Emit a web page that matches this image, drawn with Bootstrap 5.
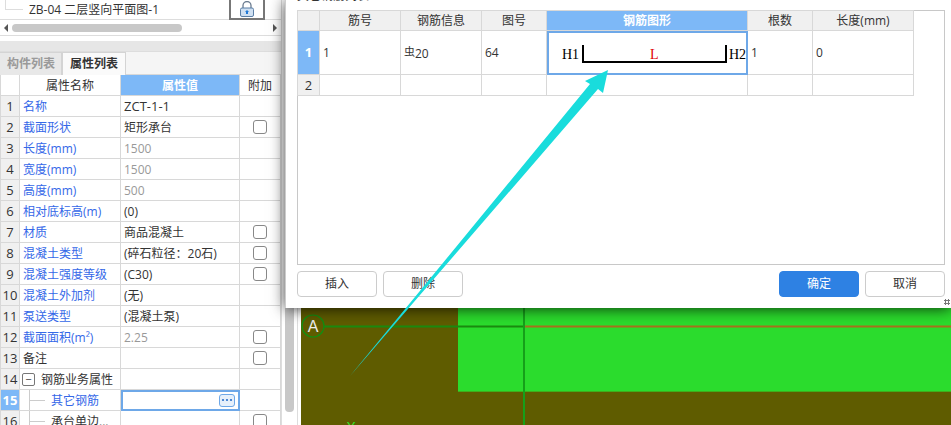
<!DOCTYPE html>
<html lang="zh-CN">
<head>
  <meta charset="UTF-8">
  <meta name="viewport" content="width=device-width, initial-scale=1.0">
  <title>钢筋图形</title>
  <link href="https://cdn.jsdelivr.net/npm/bootstrap@5.3.0/dist/css/bootstrap.min.css" rel="stylesheet">
  <style>
    html, body { height: 425px; overflow: hidden; }
    body { font-family: "Open Sans", "Noto Sans CJK SC", sans-serif; font-size: 12px; color: #333; background: #fff; }
    .stage { width: 951px; height: 425px; }

    /* left side */
    .side { width: 281px; height: 425px; overflow: hidden; }
    .tree-row { height: 20px; border-bottom: 1px solid #ddd; padding-left: 5px; }
    .tree-line { width: 18px; height: 10px; margin-top: -10px; border-bottom: 1px solid #ddd; border-left: 1px solid #ddd; }
    .tree-name { margin-left: 6px; line-height: 20px; }
    .lock-box { width: 36px; height: 20px; margin-left: auto; margin-right: 16px; border: 2px solid #777; border-top: 0; }
    .hscroll { height: 16px; border-bottom: 1px solid #ddd; }
    .hthumb { width: 170px; height: 8px; border-radius: 4px; background: #c8c8c8; margin: 0 3px; }
    .band { height: 11px; margin-top: 5px; background: #e6e6e6; border-bottom: 1px solid #ddd; }
    .tabs { height: 23px; background: #f5f5f5; }
    .tab-item { height: 23px; line-height: 21px; padding: 0 7px; font-weight: 700; border: 1px solid #d4d4d4; border-bottom: 0; background: #fafafa; }
    .tab-off { color: #9a9a9a; background: #e8e8e8; border-left: 0; padding-right: 6px; }

    .grid-tbl { table-layout: fixed; border-collapse: collapse; }
    .grid-tbl > tbody > tr > * { padding: 0 3px; line-height: 17px; border: 1px solid #d8d8d8; background: #fff; color: #333; box-shadow: none; white-space: nowrap; overflow: hidden; font-weight: 400; vertical-align: middle; }
    .grid-tbl > tbody > tr > .num { background: #f0f0f0; text-align: center; padding: 0; font-size: 13px; }
    .grid-tbl > tbody > tr > .blank { background: #fff; }
    .grid-tbl > tbody > tr > .hd { text-align: center; }
    .grid-tbl > tbody > tr > .on { background: #7db8f7; color: #fff; font-weight: 700; text-align: center; }
    .grid-tbl > tbody > tr > .nm { color: #3568e8; }
    .grid-tbl > tbody > tr > .gy { color: #999; }
    .grid-tbl > tbody > tr > .ctr { text-align: center; padding: 0; line-height: 1; }
    .grid-tbl > tbody > tr > .lat { font-size: 13px; }
    .prop-tbl { width: 280px; margin: -1px 0 0; }
    .prop-tbl tr { height: 21px; }
    .cb { width: 14px; height: 14px; margin: 0; border: 1px solid #888; border-radius: 2px; float: none; vertical-align: middle; }
    .minus { width: 13px; height: 13px; margin-left: -1px; margin-right: 6px; border: 1px solid #777; border-radius: 2px; font-size: 11px; line-height: 10px; text-align: center; }
    .indent { padding-left: 6px; }
    .tree-dash { position: relative; width: 16px; border-top: 1px solid #ccc; margin-right: 6px; }
    .tree-dash::before { content: ""; position: absolute; left: 0; top: -11px; width: 1px; height: 21px; background: #ccc; }
    .sel-cell { outline: 2px solid #6ea8e8; outline-offset: -2px; }
    .more-btn { width: 16px; height: 13px; margin-right: 1px; border: 1px solid #6ea8e8; border-radius: 3px; background: #e6f0fb; }

    .vstrip { width: 20px; height: 425px; border-left: 1px solid #ddd; }
    .vtrack { width: 16px; height: 425px; padding: 0 3px; border-right: 1px solid #ddd; }
    .vthumb { height: 412px; border-radius: 0 0 4px 4px; background: #c8c8c8; }
    .scene { width: 650px; height: 425px; display: block; }

    /* dialog */
    .dlg { position: absolute; left: 285px; top: 0; width: 666px; height: 308px; padding: 0 6px 0 11px; background: #fff; border-left: 1px solid #ccc; box-shadow: 0 1px 14px rgba(0, 0, 0, .75); }
    .dlg-title { height: 10px; line-height: 1; overflow: hidden; }
    .dlg-title span { display: block; margin-top: -10px; }
    .bar-box { height: 255px; border: 1px solid #c8c8c8; }
    .bar-tbl { width: 616px; margin: -1px 0 0 -1px; }
    .bar-tbl .head-row { height: 20px; }
    .bar-tbl .head-row > * { background: #f0f0f0; }
    .bar-tbl .big-row { height: 44px; }
    .bar-tbl .low-row { height: 21px; }
    .grid-tbl > tbody > tr > .sel-shape { padding: 0; outline: 2px solid #6ea8e8; outline-offset: -2px; }
    .shape-svg { display: block; width: 200px; height: 42px; }
    .shape-svg text { font-family: "Liberation Serif", serif; font-size: 14px; }
    .bar-sign { font-size: 11px; vertical-align: 2px; }
    .dlg-foot { margin-top: 6px; gap: 6px; }
    .act { width: 80px; height: 26px; padding: 0; font-size: 12px; border: 1px solid #ccc; border-radius: 4px; color: #333; background: #fff; }
    .act-main { border-color: #2e81e3; background: #2e81e3; color: #fff; }
    .grip { position: absolute; right: 1px; bottom: 3px; width: 6px; height: 6px; background: radial-gradient(circle, #777 1.2px, transparent 1.3px) 0 0 / 3px 3px; }

    .arrow { position: absolute; left: 0; top: 0; width: 951px; height: 425px; pointer-events: none; }
  </style>
</head>
<body>
  <div class="stage position-relative d-flex">
    <div class="side flex-shrink-0">
      <div class="tree-row d-flex align-items-center">
        <div class="tree-line"></div>
        <span class="tree-name">ZB-04 二层竖向平面图-1</span>
        <div class="lock-box d-flex align-items-center justify-content-center">
          <svg width="16" height="16" viewBox="0 0 16 16">
            <path d="M4 7V4.500a4 4 0 0 1 8 0V7" fill="none" stroke="#6b7c90" stroke-width="1.300"/>
            <rect x="1.500" y="7" width="13" height="8.500" rx="1.500" fill="#cfe0f2" stroke="#5b7fa6"/>
            <path d="M8 9l2 2H9v2H7v-2H6z" fill="#1f78d6"/>
          </svg>
        </div>
      </div>
      <div class="hscroll d-flex align-items-center">
        <svg class="ms-1" width="5" height="8" viewBox="0 0 5 8"><path d="M4 0v8L0 4z" fill="#555"/></svg>
        <div class="hthumb"></div>
        <svg class="ms-auto me-1" width="5" height="8" viewBox="0 0 5 8"><path d="M1 0v8l4-4z" fill="#555"/></svg>
      </div>
      <div class="band"></div>
      <div class="tabs d-flex">
        <div class="tab-item tab-off">构件列表</div>
        <div class="tab-item">属性列表</div>
      </div>
      <table class="table grid-tbl prop-tbl">
        <colgroup><col style="width:19px"><col style="width:101px"><col style="width:119px"><col style="width:41px"></colgroup>
        <tbody>
          <tr><td class="num blank"></td><td class="hd">属性名称</td><td class="on">属性值</td><td class="hd">附加</td></tr>
          <tr><td class="num">1</td><td class="nm">名称</td><td class="lat">ZCT-1-1</td><td></td></tr>
          <tr><td class="num">2</td><td class="nm">截面形状</td><td>矩形承台</td><td class="ctr"><input class="form-check-input cb" type="checkbox"></td></tr>
          <tr><td class="num">3</td><td class="nm">长度(mm)</td><td class="gy">1500</td><td></td></tr>
          <tr><td class="num">4</td><td class="nm">宽度(mm)</td><td class="gy">1500</td><td></td></tr>
          <tr><td class="num">5</td><td class="nm">高度(mm)</td><td class="gy">500</td><td></td></tr>
          <tr><td class="num">6</td><td class="nm">相对底标高(m)</td><td>(0)</td><td></td></tr>
          <tr><td class="num">7</td><td class="nm">材质</td><td>商品混凝土</td><td class="ctr"><input class="form-check-input cb" type="checkbox"></td></tr>
          <tr><td class="num">8</td><td class="nm">混凝土类型</td><td>(碎石粒径：20石)</td><td class="ctr"><input class="form-check-input cb" type="checkbox"></td></tr>
          <tr><td class="num">9</td><td class="nm">混凝土强度等级</td><td>(C30)</td><td class="ctr"><input class="form-check-input cb" type="checkbox"></td></tr>
          <tr><td class="num">10</td><td class="nm">混凝土外加剂</td><td>(无)</td><td></td></tr>
          <tr><td class="num">11</td><td class="nm">泵送类型</td><td>(混凝土泵)</td><td></td></tr>
          <tr><td class="num">12</td><td class="nm">截面面积(m²)</td><td class="gy">2.25</td><td class="ctr"><input class="form-check-input cb" type="checkbox"></td></tr>
          <tr><td class="num">13</td><td>备注</td><td></td><td class="ctr"><input class="form-check-input cb" type="checkbox"></td></tr>
          <tr><td class="num">14</td><td><div class="d-flex align-items-center"><span class="minus">−</span>钢筋业务属性</div></td><td></td><td></td></tr>
          <tr><td class="num on">15</td><td class="nm"><div class="d-flex align-items-center indent"><span class="tree-dash"></span>其它钢筋</div></td><td class="sel-cell"><div class="d-flex justify-content-end"><span class="more-btn d-flex align-items-center justify-content-center"><svg width="12" height="4" viewBox="0 0 12 4"><g fill="#2a6fc9"><circle cx="2" cy="2" r="1.100"/><circle cx="6" cy="2" r="1.100"/><circle cx="10" cy="2" r="1.100"/></g></svg></span></div></td><td></td></tr>
          <tr><td class="num">16</td><td><div class="d-flex align-items-center indent"><span class="tree-dash"></span>承台单边...</div></td><td></td><td class="ctr"><input class="form-check-input cb" type="checkbox"></td></tr>
        </tbody>
      </table>
    </div>

    <div class="vstrip flex-shrink-0">
      <div class="vtrack"><div class="vthumb"></div></div>
    </div>

    <svg class="scene flex-shrink-0" viewBox="301 0 650 425">
      <rect x="301" y="0" width="650" height="425" fill="#5f5c00"/>
      <rect x="458" y="0" width="493" height="392" fill="#2bdc2d"/>
      <path d="M458 391.500H951" stroke="#3fae1c"/>
      <path d="M324 326.500H524" stroke="#1b8a10" stroke-width="2"/>
      <path d="M524 326.500H951" stroke="#a8701e" stroke-width="2"/>
      <path d="M524 0V425" stroke="#16a01a" stroke-width="2"/>
      <circle cx="313" cy="326" r="11" fill="none" stroke="#119011" stroke-width="1.200"/>
      <text x="313" y="332" text-anchor="middle" font-family="Liberation Sans" font-size="16" fill="#eee">A</text>
      <text x="351" y="431" text-anchor="middle" font-family="Liberation Sans" font-size="13" fill="#2fe82f">Y</text>
    </svg>

    <div class="dlg">
      <div class="dlg-title"><span>其它钢筋列表</span></div>
      <div class="bar-box">
        <table class="table grid-tbl bar-tbl">
          <colgroup><col style="width:22px"><col style="width:81px"><col style="width:81px"><col style="width:65px"><col style="width:201px"><col style="width:65px"><col style="width:101px"></colgroup>
          <tbody>
            <tr class="head-row"><td class="num"></td><td class="hd">筋号</td><td class="hd">钢筋信息</td><td class="hd">图号</td><td class="on">钢筋图形</td><td class="hd">根数</td><td class="hd">长度(mm)</td></tr>
            <tr class="big-row"><td class="num on">1</td><td>1</td><td><span class="bar-sign">虫</span>20</td><td>64</td>
              <td class="sel-shape">
                <svg class="shape-svg" viewBox="0 0 200 42">
                  <text x="15" y="27">H1</text>
                  <path d="M36 13V30H179V13" fill="none" stroke="#000" stroke-width="2"/>
                  <text x="103" y="27" fill="#e00000">L</text>
                  <text x="182" y="27">H2</text>
                </svg>
              </td>
              <td>1</td><td>0</td></tr>
            <tr class="low-row"><td class="num">2</td><td></td><td></td><td></td><td></td><td></td><td></td></tr>
          </tbody>
        </table>
      </div>
      <div class="dlg-foot d-flex">
        <button class="btn act" type="button">插入</button>
        <button class="btn act" type="button">删除</button>
        <button class="btn act act-main ms-auto" type="button">确定</button>
        <button class="btn act" type="button">取消</button>
      </div>
      <div class="grip"></div>
    </div>

    <svg class="arrow" viewBox="0 0 951 425">
      <polygon points="608,70 603,93 598,89 350,376 590,84 585,81" fill="#19dcdc"/>
    </svg>
  </div>

  <script src="https://cdn.jsdelivr.net/npm/bootstrap@5.3.0/dist/js/bootstrap.bundle.min.js"></script>
</body>
</html>
